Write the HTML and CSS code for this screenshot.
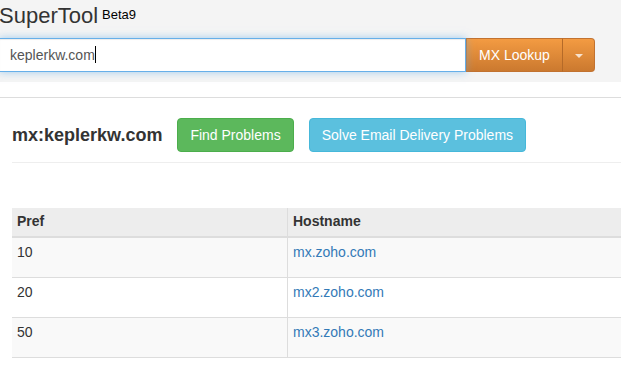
FILE: index.html
```html
<!DOCTYPE html>
<html>
<head>
<meta charset="utf-8">
<link rel="stylesheet" href="styles.css">
</head>
<body>
<header class="topbar">
  <div class="brand"><span class="brand-name">SuperTool</span><span class="brand-tag">Beta9</span></div>
  <div class="search">
    <div class="search-input">keplerkw.com<span class="caret-cursor"></span></div>
    <button class="btn-orange btn-main">MX Lookup</button>
    <button class="btn-orange btn-drop"><span class="caret"></span></button>
  </div>
</header>
<main class="content">
  <div class="title-row">
    <h2 class="domain">mx:keplerkw.com</h2>
    <button class="btn btn-green">Find Problems</button>
    <button class="btn btn-blue">Solve Email Delivery Problems</button>
  </div>
  <table class="mx-table">
    <thead>
      <tr><th class="col-pref">Pref</th><th>Hostname</th></tr>
    </thead>
    <tbody>
      <tr><td>10</td><td><a href="#">mx.zoho.com</a></td></tr>
      <tr><td>20</td><td><a href="#">mx2.zoho.com</a></td></tr>
      <tr><td>50</td><td><a href="#">mx3.zoho.com</a></td></tr>
    </tbody>
  </table>
</main>
</body>
</html>
```

FILE: styles.css
```css
html, body {
  margin: 0;
  padding: 0;
  overflow: hidden;
}
body {
  font-family: "Liberation Sans", Arial, sans-serif;
  font-size: 14px;
  line-height: 20px;
  color: #333;
  background: #fff;
}
.topbar {
  background: #f4f4f4;
  height: 82px;
  box-sizing: border-box;
  padding: 3px 26px 0 0;
  margin-left: -1px;
}
.brand {
  height: 35px;
  line-height: 24px;
}
.brand-name {
  font-size: 22px;
  color: #333;
}
.brand-tag {
  font-size: 13px;
  color: #000;
  margin-left: 4px;
  vertical-align: 4px;
}
.search {
  display: flex;
  height: 34px;
}
.search-input {
  flex: 1;
  box-sizing: border-box;
  height: 34px;
  border: 1px solid #66afe9;
  background: #fff;
  padding: 6px 10px;
  color: #555;
  box-shadow: inset 0 1px 1px rgba(0,0,0,.075), 0 0 8px rgba(102,175,233,.6);
  position: relative;
  z-index: 1;
}
.caret-cursor {
  display: inline-block;
  width: 1px;
  height: 17px;
  background: #000;
  vertical-align: -3px;
}
.btn-orange {
  font-family: inherit;
  font-size: 14px;
  line-height: 20px;
  color: #fff;
  height: 34px;
  border: 1px solid #c27230;
  background: linear-gradient(to bottom, #f39b42 0%, #cb792f 100%);
  margin: 0;
}
.btn-main {
  width: 97px;
  padding: 6px 12px;
  border-radius: 0;
  border-right-color: #b56a28;
}
.btn-drop {
  width: 32px;
  border-left: 0;
  border-radius: 0 4px 4px 0;
  padding: 0;
}
.caret {
  display: inline-block;
  width: 0;
  height: 0;
  border-top: 4px solid rgba(255,255,255,.75);
  border-left: 4px solid transparent;
  border-right: 4px solid transparent;
  vertical-align: middle;
}
.content {
  margin-top: 15px;
  border-top: 1px solid #ddd;
  padding: 20px 0 0 12px;
}
.title-row {
  display: flex;
  align-items: center;
  gap: 15px;
  padding-bottom: 10px;
  border-bottom: 1px solid #eee;
  margin-bottom: 45px;
}
.domain {
  margin: 0;
  font-size: 18px;
  font-weight: bold;
  line-height: 20px;
  color: #333;
}
.btn {
  font-family: inherit;
  font-size: 14px;
  line-height: 20px;
  padding: 6px 12px;
  border: 1px solid transparent;
  border-radius: 4px;
  color: #fff;
  height: 34px;
}
.btn-green {
  background: #5cb85c;
  border-color: #4cae4c;
}
.btn-blue {
  background: #5bc0de;
  border-color: #46b8da;
}
.mx-table {
  width: 100%;
  border-collapse: collapse;
  border-spacing: 0;
}
.mx-table th {
  text-align: left;
  font-weight: bold;
  background: #ededed;
  padding: 3px 5px 5px;
  border-bottom: 2px solid #ddd;
}
.mx-table td {
  padding: 4px 5px 15px;
  vertical-align: top;
  border-top: 1px solid #ddd;
}
.mx-table tbody tr:first-child td {
  border-top: 0;
}
.mx-table tbody tr:last-child td {
  border-bottom: 1px solid #ddd;
}
.mx-table tbody tr:nth-child(odd) td {
  background: #f9f9f9;
}
.mx-table th.col-pref,
.mx-table td:first-child {
  width: 265px;
  border-right: 1px solid #ddd;
}
.mx-table a {
  color: #337ab7;
  text-decoration: none;
}
```
